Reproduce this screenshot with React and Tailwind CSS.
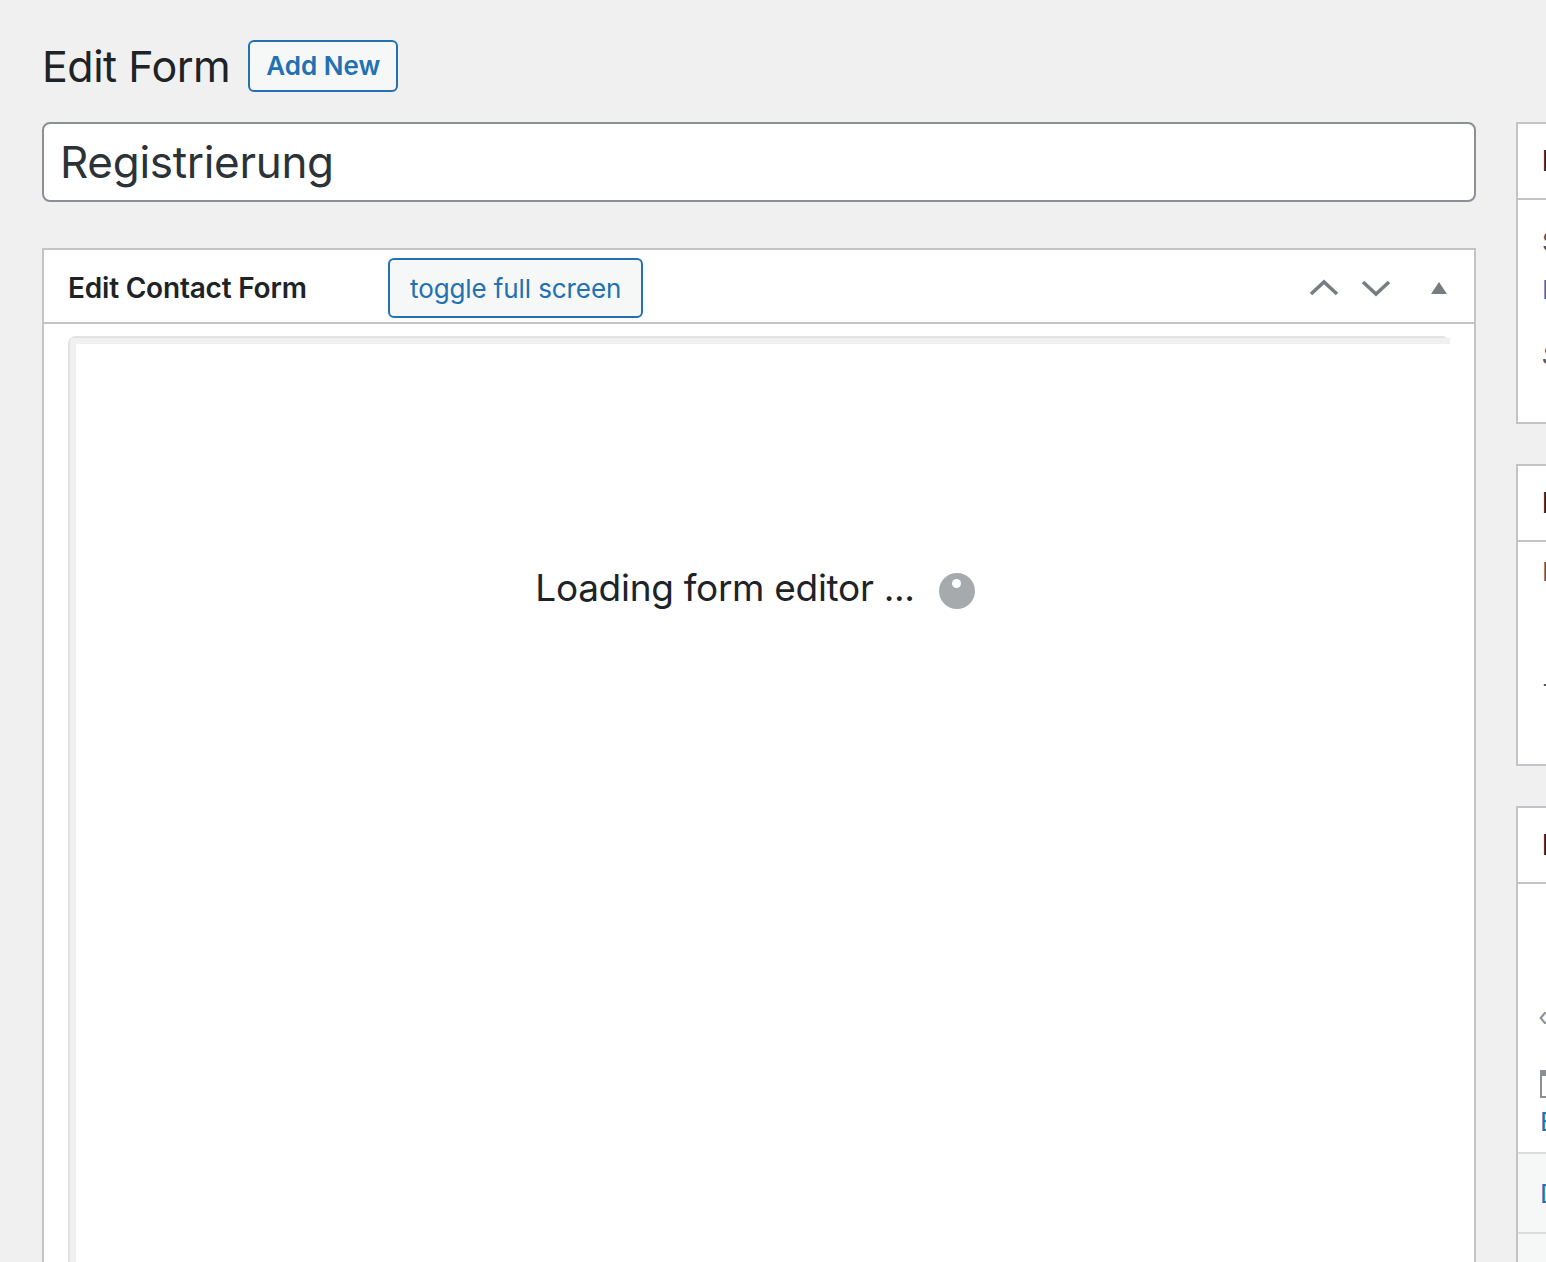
import React from "react";

// Side boxes: only their left edge shows, so keep them simple
const SideBox = ({ title, height, children, footer }) => (
  <div className="bg-white border-2 border-[#c3c4c7] flex flex-col" style={{ height }}>
    <div className="h-[76px] shrink-0 border-b-2 border-[#c3c4c7] flex items-center pl-[24px] text-[28px] font-semibold text-[#1d2327] whitespace-nowrap">
      {title}
    </div>
    <div className="flex-1 pl-[24px] text-[26px] leading-[36px] text-[#50575e] whitespace-nowrap">{children}</div>
    {footer}
  </div>
);

const ChevronUp = () => (
  <svg width="32" height="20" viewBox="0 0 32 20" fill="none">
    <path d="M3 16 L16 4 L29 16" stroke="#787c82" strokeWidth="3.5" />
  </svg>
);

const ChevronDown = () => (
  <svg width="32" height="20" viewBox="0 0 32 20" fill="none">
    <path d="M3 4 L16 16 L29 4" stroke="#787c82" strokeWidth="3.5" />
  </svg>
);

const Spinner = () => (
  <span className="relative inline-block w-[36px] h-[36px] rounded-full bg-[#a7aaad]">
    <span className="absolute left-[13px] top-[6px] w-[9px] h-[9px] rounded-full bg-white" />
  </span>
);

export default function App() {
  return (
    <div className="min-h-screen w-full overflow-hidden bg-[#f0f0f1] font-['Inter',sans-serif] text-[#1d2327]">
      <div className="pl-[42px] pt-[40px] flex gap-[40px]">
        {/* main column */}
        <div className="w-[1434px] shrink-0">
          <div className="flex items-center gap-[18px] h-[52px]">
            <h1 className="text-[43px] font-normal text-[#1d2327] tracking-[-0.5px] leading-none">Edit Form</h1>
            <button className="h-[52px] px-[16px] border-2 border-[#2271b1] rounded-[6px] bg-[#f6f7f7] text-[#2271b1] text-[26px] font-semibold leading-none">
              Add New
            </button>
          </div>

          <div className="mt-[30px] h-[80px] bg-white border-2 border-[#8c8f94] rounded-[8px] flex items-center pl-[16px] text-[44px] text-[#2c3338] tracking-[-0.3px]">
            Registrierung
          </div>

          {/* editor meta box */}
          <div className="mt-[46px] bg-white border-2 border-[#c3c4c7] h-[1100px]">
            <div className="h-[74px] border-b-2 border-[#c3c4c7] flex items-center pl-[24px] pr-[24px]">
              <h2 className="w-[320px] mt-[4px] text-[28px] font-semibold tracking-[-0.2px] text-[#1d2327]">Edit Contact Form</h2>
              <button className="mt-[4px] h-[60px] px-[20px] border-2 border-[#2271b1] rounded-[6px] bg-[#f6f7f7] text-[#2271b1] text-[26px] tracking-[-0.1px]">
                toggle full screen
              </button>
              <div className="ml-auto mt-[4px] flex items-center">
                <ChevronUp />
                <span className="w-[20px]" />
                <ChevronDown />
                <span className="w-[38px]" />
                <svg width="18" height="14" viewBox="0 0 18 14">
                  <path d="M1 13 L9 1 L17 13 Z" fill="#787c82" />
                </svg>
                <span className="w-[2px]" />
              </div>
            </div>

            <div className="pl-[24px] pr-[24px] pt-[12px]">
              <div className="border-l-2 border-t-2 border-[#e2e2e2] rounded-tl-[8px] rounded-tr-[8px]">
                <div className="border-l-[6px] border-t-[6px] border-[#f0f0f1] rounded-tl-[4px] h-[1000px] bg-white">
                  <div className="pt-[216px] flex items-center justify-center pr-[16px] gap-[24px]">
                    <span className="text-[37px] text-[#1d2327] tracking-[-0.3px]">Loading form editor ...</span>
                    <span className="mt-[12px]">
                      <Spinner />
                    </span>
                  </div>
                </div>
              </div>
            </div>
          </div>
        </div>

        {/* sidebar */}
        <div className="w-[560px] shrink-0 pt-[82px] flex flex-col gap-[40px]">
          <SideBox title="Publish" height={302}>
            <div className="mt-[24px] text-[#50575e]">Status: Published</div>
            <div className="mt-[12px] text-[#2271b1]">Edit</div>
            <div className="mt-[29px] italic text-[#50575e]">Shortcode</div>
          </SideBox>
          <SideBox title="Form Settings" height={302}>
            <div className="mt-[12px] text-[#50575e]">Language</div>
            <div className="mt-[77px] text-[#50575e]">- Default -</div>
          </SideBox>
          <SideBox
            title="Help"
            height={508}
            footer={
              <>
                <div className="h-[80px] shrink-0 bg-[#f6f7f7] border-t-2 border-[#dcdcde] flex items-center pl-[22px] text-[26px] text-[#2271b1] whitespace-nowrap">
                  Delete
                </div>
                <div className="h-[80px] shrink-0 bg-[#f6f7f7] border-t-2 border-[#dcdcde]" />
              </>
            }
          >
            <div className="mt-[115px] -ml-[4px] text-[#8c8f94]">‹ Back</div>
            <div className="mt-[35px] -ml-[2px] w-[24px] h-[28px] border-2 border-[#8c8f94] border-t-[6px]" />
            <div className="mt-[6px] -ml-[2px] text-[#2271b1]">Edit</div>
          </SideBox>
        </div>
      </div>
    </div>
  );
}
